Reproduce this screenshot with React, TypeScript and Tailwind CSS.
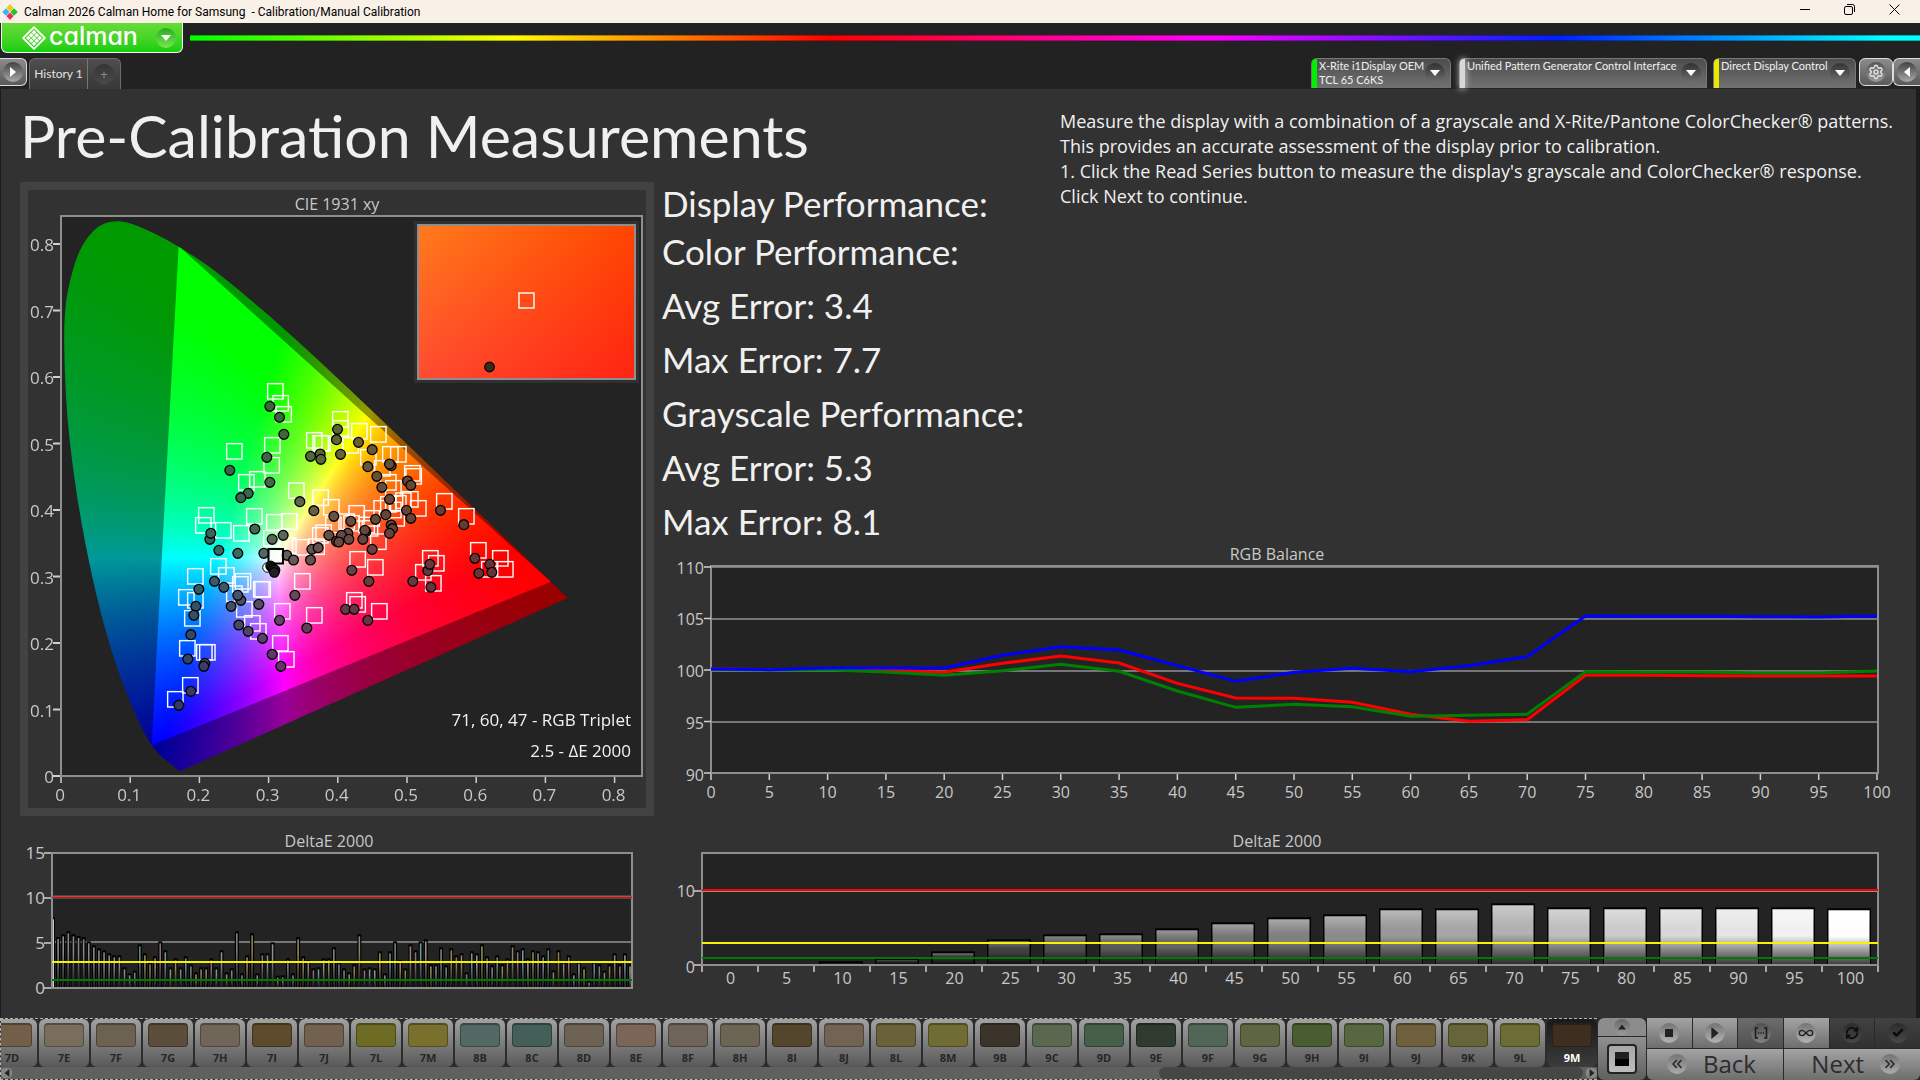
import { useEffect, useRef, type ReactNode } from "react";
import { Check, ChevronsLeft, ChevronsRight, Infinity as InfinityIcon, RefreshCw, Settings } from "lucide-react";

type Point = [number, number];

const LOCUS: Point[] = [
  [0.172, 0.007], [0.144, 0.0297], [0.1355, 0.0399], [0.1241, 0.0578], [0.1096, 0.0868], [0.0913, 0.1327],
  [0.0687, 0.2007], [0.0454, 0.295], [0.0235, 0.4127], [0.0082, 0.5384], [0.0039, 0.6548], [0.0061, 0.71],
  [0.0139, 0.7502], [0.0245, 0.786], [0.0389, 0.812], [0.055, 0.828], [0.0743, 0.8348], [0.094, 0.8335],
  [0.1142, 0.8262], [0.1547, 0.8059], [0.1929, 0.7816], [0.2296, 0.7543], [0.3016, 0.6923], [0.3731, 0.6245],
  [0.4441, 0.5547], [0.5125, 0.4866], [0.5752, 0.4242], [0.627, 0.3725], [0.6658, 0.334], [0.6915, 0.3083],
  [0.719, 0.2809], [0.7325, 0.2675],
];
const GAMUT: Point[] = [[0.17, 0.797], [0.131, 0.046], [0.708, 0.292]];

const CIE_W = 581;
const CIE_H = 560;

// Plot pixel of a chromaticity, relative to the plot's top left corner.
const toPlot = ([x, y]: Point): Point => [x * 692, CIE_H - y * 665];

function chromaColor(x: number, y: number): [number, number, number] {
  const X = x / y;
  const Z = (1 - x - y) / y;
  const r = Math.max(0, 3.2406 * X - 1.5372 - 0.4986 * Z);
  const g = Math.max(0, -0.9689 * X + 1.8758 + 0.0415 * Z);
  const b = Math.max(0, 0.0557 * X - 0.204 + 1.057 * Z);
  const m = Math.max(r, g, b, 0.0001);
  return [r / m, g / m, b / m];
}

function tracePath(ctx: CanvasRenderingContext2D, pts: Point[], smooth: boolean) {
  const px = pts.map(toPlot);
  ctx.beginPath();
  ctx.moveTo(px[0][0], px[0][1]);
  for (let i = 1; i < px.length; i++) {
    const [x, y] = px[i];
    if (smooth && i < px.length - 1) {
      const [nx, ny] = px[i + 1];
      ctx.quadraticCurveTo(x, y, (x + nx) / 2, (y + ny) / 2);
    } else ctx.lineTo(x, y);
  }
  ctx.closePath();
}

function ChromaCanvas() {
  const ref = useRef<HTMLCanvasElement>(null);
  useEffect(() => {
    const ctx = ref.current?.getContext("2d");
    if (!ctx) return;
    const layer = (gain: number) => {
      const c = document.createElement("canvas");
      c.width = CIE_W;
      c.height = CIE_H;
      const lc = c.getContext("2d")!;
      const img = lc.createImageData(CIE_W, CIE_H);
      for (let j = 0; j < CIE_H; j++) {
        for (let i = 0; i < CIE_W; i++) {
          const col = chromaColor(i / 692, Math.max(0.001, (CIE_H - j) / 665));
          const k = (j * CIE_W + i) * 4;
          for (let n = 0; n < 3; n++) img.data[k + n] = col[n] * 255 * gain;
          img.data[k + 3] = 255;
        }
      }
      lc.putImageData(img, 0, 0);
      return c;
    };
    ctx.clearRect(0, 0, CIE_W, CIE_H);
    ctx.save();
    tracePath(ctx, LOCUS, true);
    ctx.clip();
    ctx.drawImage(layer(0.6), 0, 0);
    tracePath(ctx, GAMUT, false);
    ctx.clip();
    ctx.drawImage(layer(1), 0, 0);
    ctx.restore();
  }, []);
  return <canvas ref={ref} width={CIE_W} height={CIE_H} className="block h-full w-full" />;
}

// Marker positions in thirds of a pixel, one group for each quarter of the diagram.
const third = (ox: number, oy: number, pts: Point[]): Point[] => pts.map(([x, y]) => [ox + x / 3, oy + y / 3]);

const TARGETS: Point[] = [
  ...third(20, 180, [[766, 634], [782, 670], [791, 703], [757, 796], [755, 856], [643, 814], [679, 907], [712, 898], [829, 932], [902, 953], [883, 781], [902, 790], [907, 790], [961, 718]]),
  ...third(340, 180, [[2, 745], [58, 754], [115, 763], [32, 796], [85, 832], [151, 823], [175, 823], [127, 865], [217, 880], [221, 889], [145, 907], [160, 925], [211, 958], [313, 964], [145, 973]]),
  ...third(20, 500, [[559, 46], [550, 76], [610, 91], [664, 100], [703, 49], [763, 67], [808, 64], [754, 115], [805, 137], [841, 142], [890, 140], [901, 106], [911, 98], [934, 22], [940, 75], [595, 199], [526, 229], [619, 226], [499, 292], [526, 301], [661, 253], [669, 244], [643, 281], [724, 268], [728, 268], [517, 355], [673, 328], [697, 370], [715, 394], [502, 445], [553, 457], [562, 457], [781, 430], [799, 478], [847, 244], [787, 334], [883, 346], [511, 556], [466, 598]]),
  ...third(340, 500, [[50, 40], [20, 65], [35, 70], [95, 55], [80, 75], [90, 85], [115, 125], [125, 25], [175, 10], [170, 55], [235, 25], [160, 30], [190, 2], [379, 49], [53, 178], [106, 202], [271, 175], [289, 190], [250, 217], [280, 250], [415, 151], [448, 208], [481, 175], [496, 208], [43, 301], [53, 313], [118, 334]]),
];

const READINGS: Point[] = [
  ...third(20, 180, [[748, 679], [777, 712], [790, 763], [739, 832], [628, 871], [748, 907], [683, 940], [661, 953], [870, 829], [899, 822], [901, 838], [951, 748], [948, 779], [960, 823], [838, 965]]),
  ...third(340, 180, [[54, 787], [95, 809], [82, 860], [152, 857], [147, 852], [109, 889], [124, 922], [201, 903], [211, 916], [147, 958]]),
  ...third(20, 500, [[568, 118], [571, 100], [595, 151], [652, 160], [703, 87], [755, 118], [788, 106], [730, 160], [799, 166], [819, 180], [870, 180], [874, 148], [893, 143], [880, 32], [940, 49], [925, 106], [948, 124], [582, 244], [610, 262], [535, 268], [526, 319], [520, 346], [661, 301], [652, 286], [632, 319], [715, 313], [655, 375], [683, 394], [726, 415], [823, 286], [777, 361], [859, 384], [511, 404], [502, 477], [553, 490], [550, 499], [755, 463], [781, 499], [511, 574], [475, 616]]),
  ...third(340, 500, [[31, 64], [22, 100], [3, 106], [25, 118], [-5, 126], [76, 95], [73, 91], [67, 118], [105, 58], [136, 44], [95, 148], [152, 75], [156, 86], [147, 100], [198, 31], [211, 55], [300, 31], [370, 74], [34, 211], [85, 244], [217, 244], [262, 212], [268, 193], [271, 262], [403, 175], [415, 220], [448, 193], [454, 217], [15, 328], [41, 328], [82, 361]]),
];

const DARK_READINGS: Point[] = third(20, 500, [[752, 198], [757, 203], [760, 208], [765, 210], [763, 217]]);

function readingColor([px, py]: Point) {
  const [r, g, b] = chromaColor((px - 61) / 692, (776 - py) / 665);
  const tone = (v: number) => Math.round(108 * (0.48 + 0.46 * v));
  return `rgb(${tone(r)},${tone(g)},${tone(b)})`;
}

const AXIS = "fill-[#c8c8c8] font-['Open_Sans',sans-serif] text-[16px]";
const AXIS_LARGE = "fill-[#c8c8c8] font-['Open_Sans',sans-serif] text-[17px]";

function CieChart() {
  const tenths = [0, 1, 2, 3, 4, 5, 6, 7, 8];
  return (
    <svg viewBox="28 190 618 618" className="block w-full" role="img" aria-label="CIE 1931 xy chromaticity diagram">
      <defs>
        <linearGradient id="insetWarm" x1="0" y1="0" x2="1" y2="0">
          <stop offset="0" stopColor="#ff7c1c" />
          <stop offset="1" stopColor="#ff4600" />
        </linearGradient>
        <linearGradient id="insetRed" x1="0" y1="0" x2="1" y2="0">
          <stop offset="0" stopColor="#ff4a32" />
          <stop offset="1" stopColor="#ff2412" />
        </linearGradient>
        <linearGradient id="fade" x1="0" y1="0" x2="0" y2="1">
          <stop offset="0" stopColor="#000" />
          <stop offset="1" stopColor="#fff" />
        </linearGradient>
        <mask id="fadeMask"><rect x="417" y="224" width="219" height="156" fill="url(#fade)" /></mask>
      </defs>
      <text x="337" y="210" textAnchor="middle" className={AXIS}>CIE 1931 xy</text>
      <rect x="61" y="216" width="581" height="560" className="fill-[#232323]" />
      <foreignObject x="61" y="216" width="581" height="560"><ChromaCanvas /></foreignObject>
      <rect x="61" y="216" width="581" height="560" className="fill-none stroke-[#8e8e8e]" strokeWidth="2" />
      {tenths.map((t) => (
        <g key={t} className="stroke-[#d0d0d0]">
          <line x1="53" x2="60" y1={776 - t * 66.5} y2={776 - t * 66.5} strokeWidth="2" />
          <line x1={61 + t * 69.2} x2={61 + t * 69.2} y1="777" y2="783" strokeWidth="1.5" />
          <text x="54" y={783 - t * 66.5} textAnchor="end" stroke="none" className={AXIS_LARGE}>{t ? `0.${t}` : "0"}</text>
          <text x={60 + t * 69.2} y="801" textAnchor="middle" stroke="none" className={AXIS_LARGE}>{t ? `0.${t}` : "0"}</text>
        </g>
      ))}
      {TARGETS.map(([x, y], i) => (
        <rect key={i} x={x - 7.7} y={y - 7.7} width="15.4" height="15.4" className="fill-none stroke-white" strokeWidth="1.4" />
      ))}
      {READINGS.map(([x, y], i) => (
        <circle key={i} cx={x + 0.5} cy={y} r="4.9" fill={readingColor([x, y])} className="stroke-black" strokeWidth="1.3" />
      ))}
      <circle cx="267.5" cy="567.5" r="4.8" className="fill-white stroke-black" />
      <rect x="268.5" y="549" width="14.5" height="14.5" className="fill-white/60 stroke-black" strokeWidth="2" />
      {DARK_READINGS.map(([x, y], i) => (
        <circle key={i} cx={x} cy={y} r="4.8" className="fill-[#222] stroke-black" strokeWidth="1.2" />
      ))}
      <rect x="414" y="221" width="225" height="162" className="fill-[#303030]" />
      <rect x="418" y="225" width="217" height="154" fill="url(#insetWarm)" />
      <rect x="418" y="225" width="217" height="154" fill="url(#insetRed)" mask="url(#fadeMask)" />
      <rect x="418" y="225" width="217" height="154" className="fill-none stroke-[#8e8e8e]" strokeWidth="2" />
      <rect x="519" y="293" width="15" height="15" className="fill-none stroke-white" strokeWidth="1.4" />
      <circle cx="489.5" cy="367" r="4.8" className="fill-[#3a2a1c] stroke-black" strokeWidth="1.2" />
      <g className="fill-[#f2f2f2] font-['Open_Sans',sans-serif] text-[17px]" textAnchor="end">
        <text x="631" y="726">71, 60, 47 - RGB Triplet</text>
        <text x="631" y="757">2.5 - ΔE 2000</text>
      </g>
    </svg>
  );
}

const RED = [387, 389, 388, 391, 397, 370, 348, 369, 430, 474, 475, 487, 523, 544, 539, 406, 406, 407, 408, 408, 408];
const GREEN = [388, 390, 389, 396, 406, 392, 373, 394, 453, 502, 493, 500, 529, 526, 523, 395, 396, 396, 399, 399, 393];
const BLUE = [387, 389, 384, 384, 384, 346, 320, 330, 377, 424, 397, 385, 395, 377, 350, 228, 229, 229, 230, 231, 228];
const polyline = (ys: number[]) => ys.map((y, i) => `${711 + i * 58.3},${540 + y / 3}`).join(" ");
const STEPS = Array.from({ length: 21 }, (_, i) => i);

function RgbChart() {
  return (
    <svg viewBox="654 542 1246 274" className="block w-full" role="img" aria-label="RGB Balance">
      <text x="1277" y="560" textAnchor="middle" className={AXIS}>RGB Balance</text>
      <rect x="711" y="566" width="1167" height="207" className="fill-[#232323]" />
      <g className="stroke-[#767676]" strokeWidth="2">
        <line x1="711" x2="1878" y1="567" y2="567" />
        <line x1="711" x2="1878" y1="619" y2="619" />
        <line x1="711" x2="1878" y1="671" y2="671" />
        <line x1="711" x2="1878" y1="722" y2="722" />
      </g>
      <rect x="711" y="566" width="1167" height="207" className="fill-none stroke-[#8e8e8e]" strokeWidth="2" />
      {[110, 105, 100, 95, 90].map((v, i) => (
        <g key={v}>
          <line x1="704" x2="711" y1={567 + i * 51.5} y2={567 + i * 51.5} className="stroke-[#d0d0d0]" strokeWidth="1.5" />
          <text x="704" y={573.5 + i * 51.8} textAnchor="end" className={AXIS}>{v}</text>
        </g>
      ))}
      {STEPS.map((i) => (
        <g key={i}>
          <line x1={711 + i * 58.3} x2={711 + i * 58.3} y1="774" y2="780" className="stroke-[#d0d0d0]" strokeWidth="1.5" />
          <text x={711 + i * 58.3} y="798" textAnchor="middle" className={AXIS}>{i * 5}</text>
        </g>
      ))}
      <g fill="none" strokeWidth="3">
        <polyline points={polyline(RED)} stroke="#ff0000" />
        <polyline points={polyline(GREEN)} stroke="#008000" />
        <polyline points={polyline(BLUE)} stroke="#0000ff" />
      </g>
    </svg>
  );
}

const PATCH_TOPS = [
  295, 354, 346, 337, 346, 351, 355, 367, 379, 388, 394, 403, 409, 409, 445, 463, 455, 376, 403, 430, 412, 367, 394, 445, 418,
  445, 412, 436, 460, 445, 445, 418, 445, 394, 460, 448, 337, 463, 409, 343, 463, 403, 403, 370, 470, 469, 418, 463, 355, 412,
  424, 448, 445, 418, 418, 385, 430, 448, 460, 436, 346, 448, 445, 448, 397, 463, 397, 367, 424, 448, 376, 394, 367, 361, 436,
  436, 385, 439, 388, 409, 403, 460, 397, 403, 376, 412, 439, 409, 436, 418, 379, 394, 388, 418, 394, 397, 409, 388, 454, 394,
  428, 409, 463, 428, 445, 485, 428, 436, 455, 436, 403, 436, 403, 436,
];
const BAR_TINTS = ["#8c8474", "#94928a", "#78808a", "#8c7c58", "#7c94a0", "#848484", "#94845c", "#8c7078", "#8c8c58", "#6c8478"];

function PatchErrorChart() {
  const pitch = 577 / (PATCH_TOPS.length - 1);
  return (
    <svg viewBox="20 816 634 190" className="block w-full" role="img" aria-label="DeltaE 2000 by patch">
      <defs>
        <linearGradient id="thinShade" x1="0" y1="0" x2="0" y2="1">
          <stop offset="0.3" stopColor="#000" stopOpacity="0" />
          <stop offset="1" stopColor="#000" stopOpacity="0.85" />
        </linearGradient>
      </defs>
      <text x="329" y="847" textAnchor="middle" className={AXIS}>DeltaE 2000</text>
      <rect x="52" y="853" width="580" height="135" className="fill-[#232323]" />
      <line x1="52" x2="632" y1="942" y2="942" className="stroke-[#767676]" strokeWidth="2" />
      {PATCH_TOPS.map((t, i) => {
        const x = 53 + i * pitch;
        const y = 820 + t / 3;
        const tint = i === 0 ? "#ffffff" : i < 16 ? "#8a8a8a" : BAR_TINTS[(i * 7) % 10];
        return (
          <g key={i}>
            <rect x={x - 2} y={y - 1} width="4" height={988 - y} fill="#000" />
            <rect x={x - 0.8} y={y + 1} width="1.6" height={986 - y} fill={tint} />
            {i > 0 && <rect x={x - 0.8} y={y + 1} width="1.6" height={986 - y} fill="url(#thinShade)" />}
          </g>
        );
      })}
      <rect x="52" y="853" width="580" height="135" className="fill-none stroke-[#8e8e8e]" strokeWidth="2" />
      {[15, 10, 5, 0].map((v, i) => (
        <g key={v}>
          <line x1="44" x2="51" y1={853 + i * 45} y2={853 + i * 45} className="stroke-[#d0d0d0]" strokeWidth="1.5" />
          <text x="45" y={859 + i * 45} textAnchor="end" className={AXIS_LARGE}>{v}</text>
        </g>
      ))}
      <line x1="52" x2="632" y1="897" y2="897" className="stroke-[#766]" strokeWidth="3" />
      <line x1="52" x2="632" y1="897.5" y2="897.5" className="stroke-[#ff0000]" strokeWidth="1" />
      <line x1="52" x2="632" y1="962" y2="962" className="stroke-[#f4f400]" strokeWidth="2" />
      <line x1="52" x2="632" y1="980" y2="980" className="stroke-[#007a00]" strokeWidth="2" />
    </svg>
  );
}

const GRAY_TOPS = [434, 434, 427, 418, 397, 361, 346, 343, 328, 310, 295, 286, 268, 268, 253, 265, 265, 265, 265, 265, 268];

function GrayErrorChart() {
  return (
    <svg viewBox="654 816 1246 190" className="block w-full" role="img" aria-label="DeltaE 2000 by gray level">
      <defs>
        <linearGradient id="barShade" x1="0" y1="0" x2="0" y2="1">
          <stop offset="0" stopColor="#fff" stopOpacity="0.32" />
          <stop offset="0.28" stopColor="#fff" stopOpacity="0.04" />
          <stop offset="0.48" stopColor="#000" stopOpacity="0" />
          <stop offset="1" stopColor="#000" stopOpacity="0.75" />
        </linearGradient>
      </defs>
      <text x="1277" y="847" textAnchor="middle" className={AXIS}>DeltaE 2000</text>
      <rect x="702" y="853" width="1176" height="112" className="fill-[#232323]" />
      {STEPS.slice(2).map((i) => {
        const x = 707 + i * 56;
        const y = 820 + GRAY_TOPS[i] / 3;
        const h = 965 - y;
        return (
          <g key={i}>
            <rect x={x} y={y - 1} width="44" height={h} fill="#000" />
            <rect x={x + 1.5} y={y + 1} width="41" height={Math.max(0, h - 2)} fill={`rgb(${i * 12.75},${i * 12.75},${i * 12.75})`} />
            <rect x={x + 1.5} y={y + 1} width="41" height={Math.max(0, h - 2)} fill="url(#barShade)" />
          </g>
        );
      })}
      <rect x="702" y="853" width="1176" height="112" className="fill-none stroke-[#8e8e8e]" strokeWidth="2" />
      <line x1="702" x2="1878" y1="891.5" y2="891.5" className="stroke-[#909090]" strokeWidth="1" />
      <line x1="702" x2="1878" y1="890" y2="890" className="stroke-[#f80000]" strokeWidth="2" />
      <line x1="702" x2="1878" y1="943" y2="943" className="stroke-[#f4f400]" strokeWidth="2" />
      <line x1="702" x2="1878" y1="958" y2="958" className="stroke-[#007a00]" strokeWidth="2" />
      <g className="stroke-[#d0d0d0]" strokeWidth="1.5">
        <line x1="694" x2="701" y1="891" y2="891" />
        <line x1="694" x2="701" y1="965" y2="965" />
        {[...STEPS, 21].map((i) => <line key={i} x1={702 + i * 56} x2={702 + i * 56} y1="966" y2="972" />)}
      </g>
      <text x="695" y="897" textAnchor="end" className={AXIS}>10</text>
      <text x="695" y="973" textAnchor="end" className={AXIS}>0</text>
      {STEPS.map((i) => <text key={i} x={730.5 + i * 56} y="984" textAnchor="middle" className={AXIS}>{i * 5}</text>)}
    </svg>
  );
}

function Triangle({ dir, className }: { dir: "left" | "right" | "down" | "up"; className?: string }) {
  const d = { left: "M8 0v10L2 5z", right: "M2 0v10l6-5z", down: "M0 2h10L5 8z", up: "M0 8h10L5 2z" }[dir];
  return <svg viewBox="0 0 10 10" className={className} aria-hidden="true"><path d={d} fill="currentColor" /></svg>;
}

const RoundMark = ({ children, className }: { children: ReactNode; className: string }) => (
  <span className={`grid shrink-0 place-items-center rounded-full ${className}`}>{children}</span>
);

function DeviceTab({ bar, lines, width }: { bar: string; lines: string[]; width: string }) {
  return (
    <button className={`flex h-[30px] rounded-t-md border border-b-0 border-[#777] bg-linear-to-b from-[#4c4c4c] to-[#727272] text-left text-[11px] leading-[14px] text-[#f0f0f0] ${width}`}>
      <span className={`mr-[2px] h-full w-[5px] shrink-0 rounded-tl ${bar}`} />
      <span className="flex-1 whitespace-nowrap font-['Lato',sans-serif]">
        {lines.map((l) => <span key={l} className="block">{l}</span>)}
      </span>
      <RoundMark className="mr-[5px] mt-1 h-5 w-5 bg-linear-to-b from-[#333] to-[#707070]">
        <Triangle dir="down" className="h-2.5 w-2.5 text-white" />
      </RoundMark>
    </button>
  );
}

const SWATCHES: [string, string][] = [
  ["7D", "bg-[#735f49]"], ["7E", "bg-[#796e5e]"], ["7F", "bg-[#6c6250]"], ["7G", "bg-[#5a4d39]"], ["7H", "bg-[#706658]"],
  ["7I", "bg-[#5e4b2d]"], ["7J", "bg-[#73614f]"], ["7L", "bg-[#6d6b24]"], ["7M", "bg-[#79702d]"], ["8B", "bg-[#526862]"],
  ["8C", "bg-[#435f57]"], ["8D", "bg-[#6e6254]"], ["8E", "bg-[#7a6556]"], ["8F", "bg-[#6e6458]"], ["8H", "bg-[#6d6554]"],
  ["8I", "bg-[#54452d]"], ["8J", "bg-[#736352]"], ["8L", "bg-[#6a6138]"], ["8M", "bg-[#6f6d33]"], ["9B", "bg-[#3b342a]"],
  ["9C", "bg-[#5a684f]"], ["9D", "bg-[#465f49]"], ["9E", "bg-[#2e3b2e]"], ["9F", "bg-[#526655]"], ["9G", "bg-[#5d6541]"],
  ["9H", "bg-[#4a5d31]"], ["9I", "bg-[#576740]"], ["9J", "bg-[#6e5f3d]"], ["9K", "bg-[#656539]"], ["9L", "bg-[#6b6d34]"],
  ["9M", "bg-[#3e2e1f]"],
];

function PatchStrip() {
  return (
    <section className="flex min-w-0 flex-1 flex-col overflow-hidden border border-r-0 border-dashed border-[#b4b4b4] bg-[#2c2c2c]" aria-label="Patches">
      <div className="flex h-[48px] justify-end overflow-hidden">
        {SWATCHES.map(([name, color]) => {
          const on = name === "9M";
          return (
            <button
              key={name}
              className={`mr-[2px] flex w-[50px] shrink-0 flex-col items-center rounded-md pt-1 last:mr-0 ${on ? "bg-linear-to-b from-[#1a1a1a] to-[#3c3c3c] text-white" : "bg-linear-to-b from-[#a2a2a2] to-[#595959] text-[#262626]"}`}
            >
              <span className={`h-6 w-10 rounded-[4px] border border-t-2 border-black/30 ${color}`} />
              <span className="pt-[3px] font-['Open_Sans',sans-serif] text-[11px] leading-[15px] font-bold">{name}</span>
            </button>
          );
        })}
      </div>
      <div className="flex h-3 items-center bg-[#606060]">
        <button aria-label="Scroll left" className="grid h-[10px] w-[11px] place-items-center rounded bg-[#858585]"><Triangle dir="left" className="h-2 w-2 text-[#222]" /></button>
        <div className="flex h-full flex-1 justify-end"><span className="h-full w-[27%] rounded-md bg-[#464646]" /></div>
        <button aria-label="Scroll right" className="ml-[3px] grid h-[10px] w-[11px] place-items-center rounded bg-[#858585]"><Triangle dir="right" className="h-2 w-2 text-[#222]" /></button>
      </div>
    </section>
  );
}

const LIGHT = "bg-linear-to-b from-[#a4a4a4] to-[#6e6e6e]";
const MID = "bg-linear-to-b from-[#6c6c6c] to-[#505050]";
const DIM = "bg-linear-to-b from-[#424242] to-[#303030]";

function Transport() {
  const items: [string, string, string, ReactNode][] = [
    ["Stop", LIGHT, "bg-linear-to-b from-[#747474] to-[#b4b4b4]", <span className="h-2 w-2 bg-[#222]" />],
    ["Play", LIGHT, "bg-linear-to-b from-[#747474] to-[#b4b4b4]", <Triangle dir="right" className="h-3 w-3 text-[#222]" />],
    ["Read series", MID, "bg-linear-to-b from-[#505050] to-[#828282]", (
      <svg viewBox="0 0 14 12" className="h-3 w-3.5" fill="none" stroke="#1c1c1c" strokeWidth="1.6" aria-hidden="true">
        <path d="M4 1H1.5v10H4M10 1h2.5v10H10M4 6h1.2M6.4 6h1.2M8.8 6H10" />
      </svg>
    )],
    ["Read continuous", LIGHT, "bg-linear-to-b from-[#747474] to-[#b4b4b4]", <InfinityIcon className="h-4 w-4 text-[#222]" strokeWidth={2} />],
    ["Refresh", DIM, "bg-linear-to-b from-[#2c2c2c] to-[#484848]", <RefreshCw className="h-3.5 w-3.5 text-[#0c0c0c]" strokeWidth={3} />],
    ["Accept", DIM, "bg-linear-to-b from-[#2c2c2c] to-[#484848]", <Check className="h-3 w-3 text-[#0c0c0c]" strokeWidth={5} />],
  ];
  return (
    <section className="flex shrink-0 gap-px pl-px" aria-label="Transport">
      <div className="flex w-12 flex-col gap-px">
        <button aria-label="Expand" className="grid h-[18px] place-items-center rounded-t-md bg-[#8c8c8c]">
          <RoundMark className="h-4 w-4 bg-linear-to-b from-[#666] to-[#9c9c9c]"><Triangle dir="up" className="h-2 w-2 text-[#222]" /></RoundMark>
        </button>
        <button aria-label="Patch window" className="grid flex-1 place-items-center rounded-b-md bg-linear-to-b from-[#909090] to-[#606060]">
          <span className="grid h-[30px] w-[30px] place-items-center rounded-[4px] border-2 border-[#222] bg-linear-to-b from-[#a8a8a8] to-[#bcbcbc]">
            <span className="h-[14px] w-[14px] bg-linear-to-b from-[#202020] from-50% to-black to-50%" />
          </span>
        </button>
      </div>
      <div className="flex w-[273px] flex-col gap-px">
        <div className="grid h-[30px] grid-cols-6 gap-px">
          {items.map(([label, tone, mark, icon]) => (
            <button key={label} aria-label={label} className={`grid place-items-center ${tone}`}>
              <RoundMark className={`h-5 w-5 ${mark}`}>{icon}</RoundMark>
            </button>
          ))}
        </div>
        <div className="grid flex-1 grid-cols-2 gap-px font-['Open_Sans',sans-serif] text-[24px] leading-none font-medium text-[#2c2c2c]">
          <button className={`flex items-center gap-4 rounded-bl-md pb-0.5 pl-5 ${LIGHT}`}>
            <RoundMark className="h-5 w-5 bg-linear-to-b from-[#747474] to-[#acacac]"><ChevronsLeft className="h-4 w-4" strokeWidth={2.5} /></RoundMark>
            <span>Back</span>
          </button>
          <button className={`flex items-center justify-end gap-4 rounded-br-md pr-5 pb-0.5 ${LIGHT}`}>
            <span>Next</span>
            <RoundMark className="h-5 w-5 bg-linear-to-b from-[#747474] to-[#acacac]"><ChevronsRight className="h-4 w-4" strokeWidth={2.5} /></RoundMark>
          </button>
        </div>
      </div>
    </section>
  );
}

function TitleBar() {
  return (
    <div className="flex h-[23px] items-center bg-[#f9f1e7] pl-[2px] text-black">
      <svg viewBox="0 0 16 16" className="h-4 w-4" aria-hidden="true">
        <path d="M8 0l3.6 4L8 7.6 4.4 4z" fill="#f7c325" />
        <path d="M4 4.2L7.6 8 4 11.8.2 8z" fill="#35b8ea" />
        <path d="M12 4.2L15.8 8 12 11.8 8.4 8z" fill="#1fc71f" />
        <path d="M8 8.4l3.6 3.6L8 16l-3.6-4z" fill="#ee2a5a" />
      </svg>
      <span className="ml-[6px] whitespace-pre font-['Roboto',sans-serif] text-[12px]">Calman 2026 Calman Home for Samsung  - Calibration/Manual Calibration</span>
      <div className="ml-auto flex h-full pr-[3px]">
        <button aria-label="Minimize" className="grid w-[45px] place-items-center pb-1"><span className="h-px w-2.5 bg-black" /></button>
        <button aria-label="Restore" className="grid w-[45px] place-items-center pb-1">
          <svg viewBox="0 0 11 11" className="h-[11px] w-[11px]" fill="none" stroke="#000" aria-hidden="true">
            <rect x="0.5" y="2.5" width="8" height="8" rx="1.5" /><path d="M3 .5h5.5a2 2 0 0 1 2 2V8" />
          </svg>
        </button>
        <button aria-label="Close" className="grid w-[45px] place-items-center pb-1">
          <svg viewBox="0 0 11 11" className="h-[11px] w-[11px]" stroke="#000" aria-hidden="true"><path d="M.5.5l10 10M10.500.5l-10 10" /></svg>
        </button>
      </div>
    </div>
  );
}

function Header() {
  return (
    <header className="bg-[#222]">
      <div className="flex h-[30px] items-start pl-px">
        <button className="flex h-[30px] w-[182px] items-center rounded-b-md border border-t-0 border-white/90 bg-linear-to-b from-[#66dc38] to-[#10cc10] pl-[20px] text-white">
          <svg viewBox="0 0 24 24" className="h-6 w-6" aria-hidden="true">
            <path d="M12 1.200L22.800 12 12 22.800 1.200 12z" fill="none" stroke="#fff" strokeWidth="1.8" strokeLinejoin="round" />
            <g fill="#fff">
              {[[12, 6.400], [9.200, 9.200], [14.800, 9.200], [6.400, 12], [12, 12], [17.600, 12], [9.200, 14.800], [14.800, 14.800], [12, 17.600]].map(([x, y]) => (
                <path key={`${x}-${y}`} d={`M${x} ${y - 2.300}l2.300 2.300-2.300 2.300-2.300-2.300z`} />
              ))}
            </g>
          </svg>
          <span className="ml-[3px] pb-0.5 font-['Inter',sans-serif] text-[25px] leading-[25px] font-medium [font-feature-settings:'cv11']">calman</span>
          <RoundMark className="ml-auto mr-[6px] h-5 w-5 bg-linear-to-b from-[#1fae1f] to-[#74e84e]"><Triangle dir="down" className="h-2.5 w-2.5" /></RoundMark>
        </button>
        <div className="mt-3 ml-[7px] h-[6px] flex-1 border-y border-black/30 bg-[linear-gradient(90deg,#00ff00_0%,#ffff00_18.500%,#ff0000_37%,#ff00ff_59%,#0020ff_79%,#00ffff_98%)]" />
      </div>
      <div className="flex h-[36px] items-start pt-[5px]">
        <button aria-label="Expand panel" className="flex h-[28px] w-[27px] items-center justify-center rounded-r-md border border-l-0 border-[#ddd] bg-linear-to-b from-[#8c8c8c] to-[#5a5a5a]">
          <RoundMark className="h-5 w-5 bg-linear-to-b from-[#444] to-[#aaa]"><Triangle dir="right" className="h-2.5 w-2.5 text-white" /></RoundMark>
        </button>
        <div className="ml-[2px] flex h-[31px] rounded-t-md border border-b-0 border-[#6e6e6e] bg-linear-to-b from-[#4e4e4e] to-[#383838]">
          <button className="w-[58px] border-r border-[#777] font-['Lato',sans-serif] text-[12px] text-[#e4e4e4]">History 1</button>
          <button aria-label="Add history" className="grid w-[32px] place-items-center">
            <RoundMark className="h-5 w-5 bg-linear-to-b from-[#343434] to-[#4a4a4a] text-[13px] leading-none text-[#8c8c8c]">+</RoundMark>
          </button>
        </div>
        <div className="ml-auto flex">
          <DeviceTab width="w-[140px]" bar="bg-[#00f000]" lines={["X-Rite i1Display OEM", "TCL 65 C6KS"]} />
          <span className="w-2" />
          <DeviceTab width="w-[248px]" bar="bg-[#d8d8d8] shadow-[0_0_6px_1px_rgba(255,255,255,0.6)]" lines={["Unified Pattern Generator Control Interface"]} />
          <span className="w-[6px]" />
          <DeviceTab width="w-[143px]" bar="bg-[#e8e800]" lines={["Direct Display Control"]} />
          <button aria-label="Settings" className="ml-[3px] grid h-[28px] w-[34px] place-items-center rounded-md border border-[#ddd] bg-linear-to-b from-[#8c8c8c] to-[#5a5a5a]">
            <RoundMark className="h-5 w-5 bg-linear-to-b from-[#555] to-[#999]"><Settings className="h-4 w-4 text-[#d8d8d8]" strokeWidth={2.5} /></RoundMark>
          </button>
          <button aria-label="Collapse panel" className="grid h-[28px] w-[27px] place-items-center rounded-l-md border border-r-0 border-[#ddd] bg-linear-to-b from-[#8c8c8c] to-[#5a5a5a]">
            <RoundMark className="h-5 w-5 bg-linear-to-b from-[#444] to-[#aaa]"><Triangle dir="left" className="h-2.5 w-2.5 text-white" /></RoundMark>
          </button>
        </div>
      </div>
    </header>
  );
}

export default function App() {
  return (
    <div className="flex min-h-screen flex-col bg-[#323232] text-[#f0f0f0]">
      <TitleBar />
      <Header />
      <main className="flex-1 border-l border-r-4 border-l-[#1c1c1c] border-r-[#1c1c1c] pr-4 pl-[19px]">
        <div className="grid grid-cols-[minmax(0,634fr)_minmax(0,406fr)_minmax(0,840fr)]">
          <h1 className="col-span-2 h-[93px] whitespace-nowrap pt-[11px] font-['Lato',sans-serif] text-[59px] leading-[72px]">Pre-Calibration Measurements</h1>
          <div className="col-start-3 row-span-2 row-start-1 whitespace-nowrap pt-[20px] font-['Open_Sans',sans-serif] text-[18px] leading-[25px]">
            <p>Measure the display with a combination of a grayscale and X-Rite/Pantone ColorChecker® patterns.</p>
            <p>This provides an accurate assessment of the display prior to calibration.</p>
            <p>1. Click the Read Series button to measure the display's grayscale and ColorChecker® response.</p>
            <p>Click Next to continue.</p>
          </div>
          <section className="row-span-2 border-8 border-[#424242]"><CieChart /></section>
          <section className="h-[360px] whitespace-nowrap pl-2 font-['Lato',sans-serif] text-[35px] leading-[54px]">
            <h2 className="leading-[42px]">Display Performance:</h2>
            <h3>Color Performance:</h3>
            <p>Avg Error: 3.4</p>
            <p>Max Error: 7.7</p>
            <h3>Grayscale Performance:</h3>
            <p>Avg Error: 5.3</p>
            <p>Max Error: 8.1</p>
          </section>
          <div className="col-span-2 col-start-2"><RgbChart /></div>
          <PatchErrorChart />
          <div className="col-span-2"><GrayErrorChart /></div>
        </div>
      </main>
      <footer className="flex h-[62px] bg-[#2a2a2a]">
        <PatchStrip />
        <Transport />
      </footer>
    </div>
  );
}
